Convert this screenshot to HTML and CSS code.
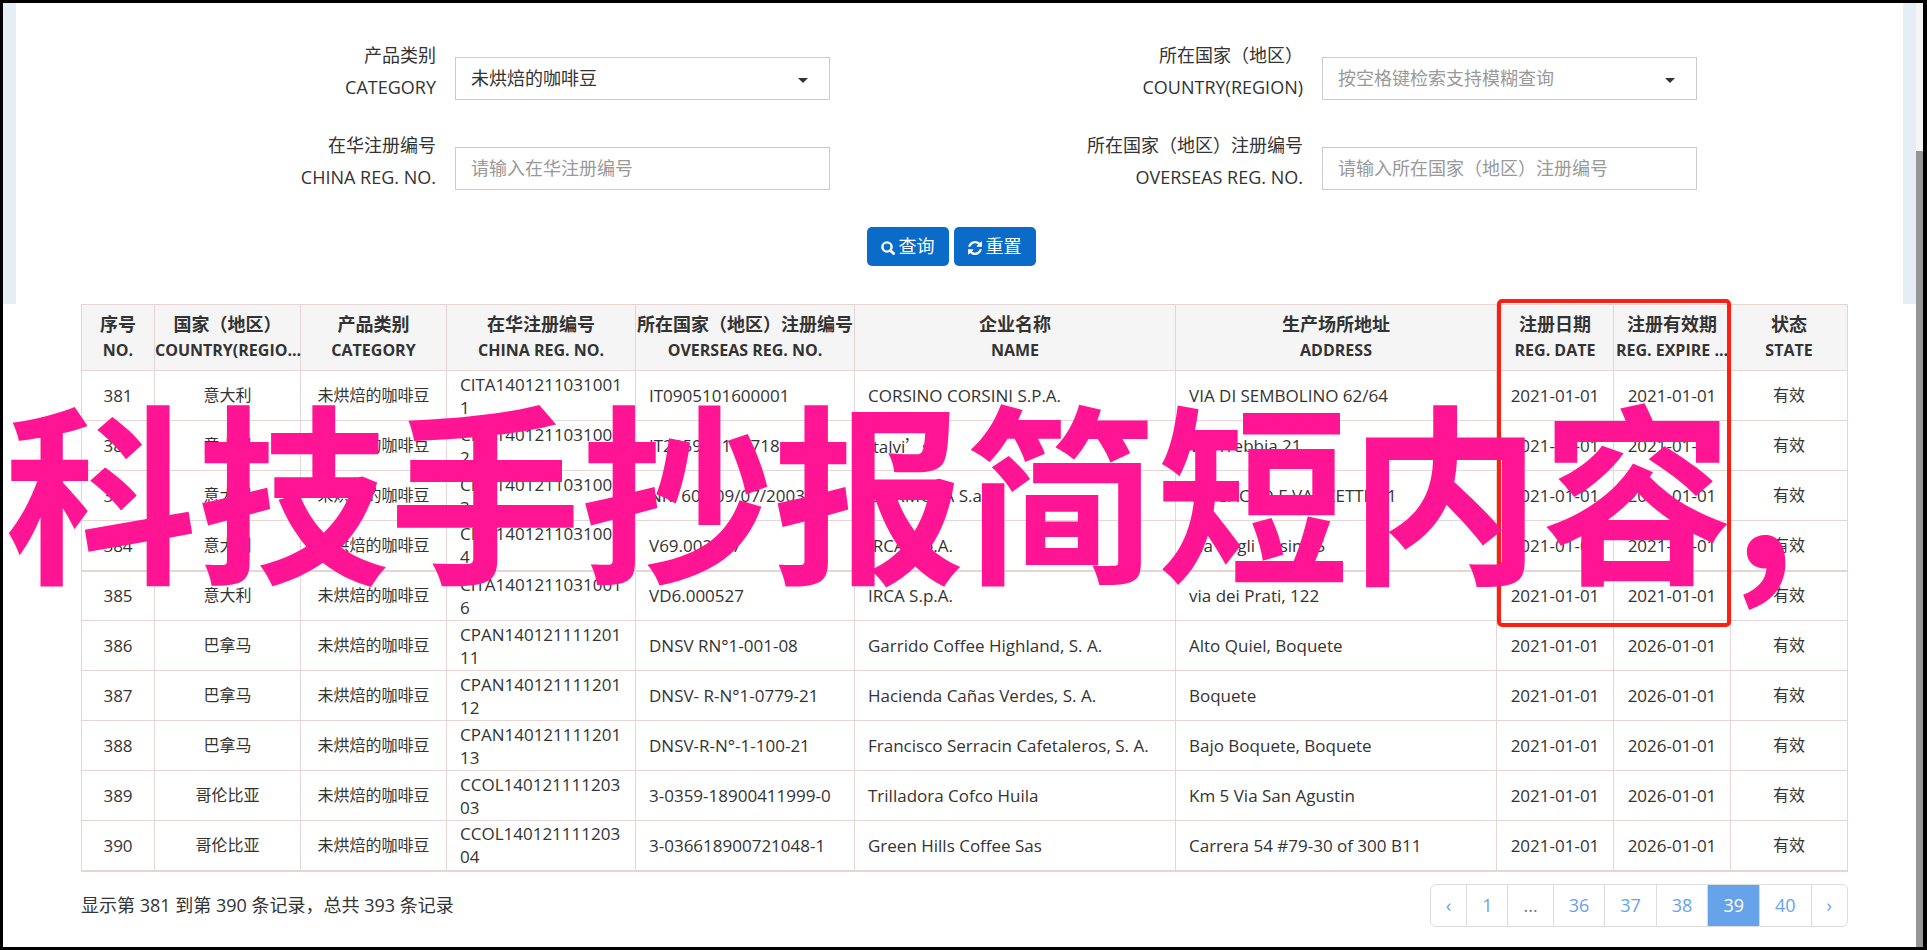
FILE: index.html
```html
<!DOCTYPE html>
<html lang="zh-CN">
<head>
<meta charset="utf-8">
<title>注册信息查询</title>
<link rel="stylesheet" href="styles.css">
</head>
<body>
<div class="frame">
<main class="page">
<form class="search">
  <div class="fields">
    <div class="field">
      <label class="field-label" for="category">产品类别<br>CATEGORY</label>
      <div class="control-wrap select-wrap"><select id="category" class="control"><option>未烘焙的咖啡豆</option></select></div>
    </div>
    <div class="field">
      <label class="field-label" for="country">所在国家（地区）<br>COUNTRY(REGION)</label>
      <div class="control-wrap select-wrap"><select id="country" class="control control-empty"><option>按空格键检索支持模糊查询</option></select></div>
    </div>
    <div class="field">
      <label class="field-label" for="china-no">在华注册编号<br>CHINA REG. NO.</label>
      <div class="control-wrap"><input id="china-no" class="control" type="text" placeholder="请输入在华注册编号"></div>
    </div>
    <div class="field">
      <label class="field-label" for="overseas-no">所在国家（地区）注册编号<br>OVERSEAS REG. NO.</label>
      <div class="control-wrap"><input id="overseas-no" class="control" type="text" placeholder="请输入所在国家（地区）注册编号"></div>
    </div>
  </div>
  <div class="actions">
    <button class="btn" type="button"><svg class="icon" viewBox="0 0 14 14" aria-hidden="true"><circle cx="6" cy="6" r="4.6" fill="none" stroke="currentColor" stroke-width="2.4"/><path d="M9.4 9.4l3.2 3.2" stroke="currentColor" stroke-width="2.8" stroke-linecap="round"/></svg>查询</button>
    <button class="btn" type="button"><svg class="icon" viewBox="0 0 1536 1536" aria-hidden="true"><path fill="currentColor" d="M1511 928q0 5-1 7-64 268-268 434.500T764 1536q-146 0-282.500-55T238 1324l-129 129q-19 19-45 19t-45-19-19-45V960q0-26 19-45t45-19h448q26 0 45 19t19 45-19 45l-137 137q71 66 161 102t187 36q134 0 250-65t186-179q11-17 53-117 8-23 30-23h192q13 0 22.500 9.500t9.500 22.500zM1536 128v448q0 26-19 45t-45 19h-448q-26 0-45-19t-19-45 19-45l138-138Q969 256 768 256q-134 0-250 65T332 500q-11 17-53 117-8 23-30 23H50q-13 0-22.500-9.500T18 608v-7q65-268 270-434.500T768 0q146 0 284 55.500T1297 212l130-129q19-19 45-19t45 19 19 45z"/></svg>重置</button>
  </div>
</form>
<section class="results">
  <div class="table-wrap">
  <table class="grid">
    <colgroup><col class="c-no"><col class="c-mid"><col class="c-mid"><col class="c-china"><col class="c-over"><col class="c-wide"><col class="c-wide"><col class="c-date"><col class="c-date"><col class="c-date"></colgroup>
    <thead><tr>
      <th>序号<span>NO.</span></th><th>国家（地区）<span>COUNTRY(REGIO...</span></th><th>产品类别<span>CATEGORY</span></th><th>在华注册编号<span>CHINA REG. NO.</span></th><th>所在国家（地区）注册编号<span>OVERSEAS REG. NO.</span></th><th>企业名称<span>NAME</span></th><th>生产场所地址<span>ADDRESS</span></th><th>注册日期<span>REG. DATE</span></th><th>注册有效期<span>REG. EXPIRE ...</span></th><th>状态<span>STATE</span></th>
    </tr></thead>
    <tbody>
    <tr><td>381</td><td class="zh">意大利</td><td class="zh">未烘焙的咖啡豆</td><td>CITA14012110310011</td><td>IT0905101600001</td><td>CORSINO CORSINI S.P.A.</td><td>VIA DI SEMBOLINO 62/64</td><td>2021-01-01</td><td>2021-01-01</td><td class="zh">有效</td></tr>
    <tr><td>382</td><td class="zh">意大利</td><td class="zh">未烘焙的咖啡豆</td><td>CITA14012110310012</td><td>IT205901100718</td><td>Italvi<span class="wide-mark">’</span>s</td><td>Via Trebbia 21</td><td>2021-01-01</td><td>2021-01-01</td><td class="zh">有效</td></tr>
    <tr><td>383</td><td class="zh">意大利</td><td class="zh">未烘焙的咖啡豆</td><td>CITA14012110310013</td><td>NR. 601 09/07/2003</td><td>CIARMOKA S.a.s.</td><td>VIA SACCO E VANZETTI, 11</td><td>2021-01-01</td><td>2021-01-01</td><td class="zh">有效</td></tr>
    <tr><td>384</td><td class="zh">意大利</td><td class="zh">未烘焙的咖啡豆</td><td>CITA14012110310014</td><td>V69.002217</td><td>IRCA S.p.A.</td><td>Via degli Orsini, 5</td><td>2021-01-01</td><td>2021-01-01</td><td class="zh">有效</td></tr>
    <tr class="group-start"><td>385</td><td class="zh">意大利</td><td class="zh">未烘焙的咖啡豆</td><td>CITA14012110310016</td><td>VD6.000527</td><td>IRCA S.p.A.</td><td>via dei Prati, 122</td><td>2021-01-01</td><td>2021-01-01</td><td class="zh">有效</td></tr>
    <tr><td>386</td><td class="zh">巴拿马</td><td class="zh">未烘焙的咖啡豆</td><td>CPAN14012111120111</td><td>DNSV RN°1-001-08</td><td>Garrido Coffee Highland, S. A.</td><td>Alto Quiel, Boquete</td><td>2021-01-01</td><td>2026-01-01</td><td class="zh">有效</td></tr>
    <tr><td>387</td><td class="zh">巴拿马</td><td class="zh">未烘焙的咖啡豆</td><td>CPAN14012111120112</td><td>DNSV- R-N°1-0779-21</td><td>Hacienda Cañas Verdes, S. A.</td><td>Boquete</td><td>2021-01-01</td><td>2026-01-01</td><td class="zh">有效</td></tr>
    <tr><td>388</td><td class="zh">巴拿马</td><td class="zh">未烘焙的咖啡豆</td><td>CPAN14012111120113</td><td>DNSV-R-N°-1-100-21</td><td>Francisco Serracin Cafetaleros, S. A.</td><td>Bajo Boquete, Boquete</td><td>2021-01-01</td><td>2026-01-01</td><td class="zh">有效</td></tr>
    <tr><td>389</td><td class="zh">哥伦比亚</td><td class="zh">未烘焙的咖啡豆</td><td>CCOL14012111120303</td><td>3-0359-18900411999-0</td><td>Trilladora Cofco Huila</td><td>Km 5 Via San Agustin</td><td>2021-01-01</td><td>2026-01-01</td><td class="zh">有效</td></tr>
    <tr><td>390</td><td class="zh">哥伦比亚</td><td class="zh">未烘焙的咖啡豆</td><td>CCOL14012111120304</td><td>3-036618900721048-1</td><td>Green Hills Coffee Sas</td><td>Carrera 54 #79-30 of 300 B11</td><td>2021-01-01</td><td>2026-01-01</td><td class="zh">有效</td></tr>
    </tbody>
  </table>
  <div class="marker"></div>
  </div>
  <footer class="foot">
    <p class="info">显示第 381 到第 390 条记录，总共 393 条记录</p>
    <nav class="pager"><a href="#">‹</a><a href="#">1</a><span>...</span><a href="#">36</a><a href="#">37</a><a href="#">38</a><a class="active" href="#">39</a><a href="#">40</a><a href="#">›</a></nav>
  </footer>
</section>
</main>
<div class="scrollbar"><div class="thumb"></div></div>
<div class="headline">科技手抄报简短内容,</div>
</div>
</body>
</html>
```
FILE: styles.css
```css
* { box-sizing: border-box; }
body {
  margin: 0;
  background: #fff;
  color: #333;
  font: 17px/23px "Open Sans", "Noto Sans CJK SC", sans-serif;
}
.frame {
  position: relative;
  display: flex;
  min-height: 100vh;
  border: 3px solid #000;
  border-right-width: 4px;
  overflow: hidden;
}
.page { flex: 1; min-width: 0; }
.search {
  padding: 36px 65px 38px;
  border: solid #e6eef5;
  border-width: 0 13px;
}
.fields {
  display: grid;
  grid-template-columns: 1fr 1fr;
  row-gap: 26px;
  margin-right: 141px;
}
.field {
  display: grid;
  grid-template-columns: 355px 375px;
  gap: 19px;
  align-items: center;
}
.field-label { text-align: right; font-size: 18px; line-height: 32px; }
.field:nth-child(even) { justify-content: end; }
.control-wrap { margin-top: 14px; }
.control {
  display: block;
  width: 100%;
  height: 43px;
  padding: 0 15px;
  border: 1px solid #ccc;
  border-radius: 0;
  background: #fff;
  color: #333;
  font: inherit;
  font-size: 18px;
  appearance: none;
}
.control-empty, .control::placeholder { color: #999; opacity: 1; }
.select-wrap { position: relative; }
.select-wrap::after {
  content: "";
  position: absolute;
  right: 22px;
  top: 21px;
  border: 5px solid transparent;
  border-top-color: #333;
  border-bottom: 0;
}
.actions { display: flex; justify-content: center; gap: 5px; margin-top: 34px; padding-right: 17px; }
.btn {
  display: flex;
  align-items: center;
  gap: 4px;
  height: 39px;
  padding: 0 14px;
  border: 0;
  border-radius: 5px;
  background: #0a6bc8;
  color: #fff;
  font: inherit;
  font-size: 18px;
}
.icon { width: 14px; height: 14px; margin-top: 3px; }
.results { padding: 0 68px 0 78px; }
.table-wrap { position: relative; }
.grid { width: 100%; table-layout: fixed; border-collapse: collapse; border-bottom: 2px solid #e6d5d5; }
.c-no { width: 73px; }
.c-mid { width: 146px; }
.c-china { width: 189px; }
.c-over { width: 219px; }
.c-date { width: 117px; }
.grid th, .grid td { border: 1px solid #e6d5d5; }
.grid .group-start td { border-top-width: 2px; }
.grid th {
  height: 66px;
  padding: 0 0 3px;
  background: #f5f5f5;
  font-size: 18px;
  line-height: 28px;
  white-space: nowrap;
}
.grid th span { display: block; font-size: 16px; line-height: 24px; }
.grid td { height: 50px; padding: 0 13px; word-break: break-all; text-align: center; }
.grid .zh { font-size: 16px; }
.grid td:nth-child(n+4):nth-child(-n+7) { text-align: left; }
.grid td:nth-child(n+8) { padding: 0 8px; }
.wide-mark { font-family: "Noto Sans CJK SC", sans-serif; }
.marker {
  position: absolute;
  right: 117px;
  top: -5px;
  width: 234px;
  height: 328px;
  border: 4px solid #ff1e10;
  border-radius: 5px;
}
.foot { display: flex; justify-content: space-between; align-items: center; padding-top: 12px; }
.info { margin: 0; font-size: 18px; }
.pager { display: flex; font-size: 18px; line-height: 41px; border: 1px solid #ddd; border-radius: 6px; overflow: hidden; }
.pager > * { padding: 0 15px; color: #66a3eb; text-decoration: none; }
.pager > * + * { border-left: 1px solid #ddd; }
.pager span { color: #777; }
.pager .active { background: #66a3eb; color: #fff; }
.scrollbar { width: 7px; padding-top: 148px; background: #f5f5f5; display: flex; }
.thumb { flex: 1; background: #969696; }
.headline {
  position: absolute;
  left: 2px;
  top: 342px;
  color: #ff1493;
  font: bold 192px/280px "Noto Sans CJK SC", sans-serif;
  white-space: nowrap;
}
```
